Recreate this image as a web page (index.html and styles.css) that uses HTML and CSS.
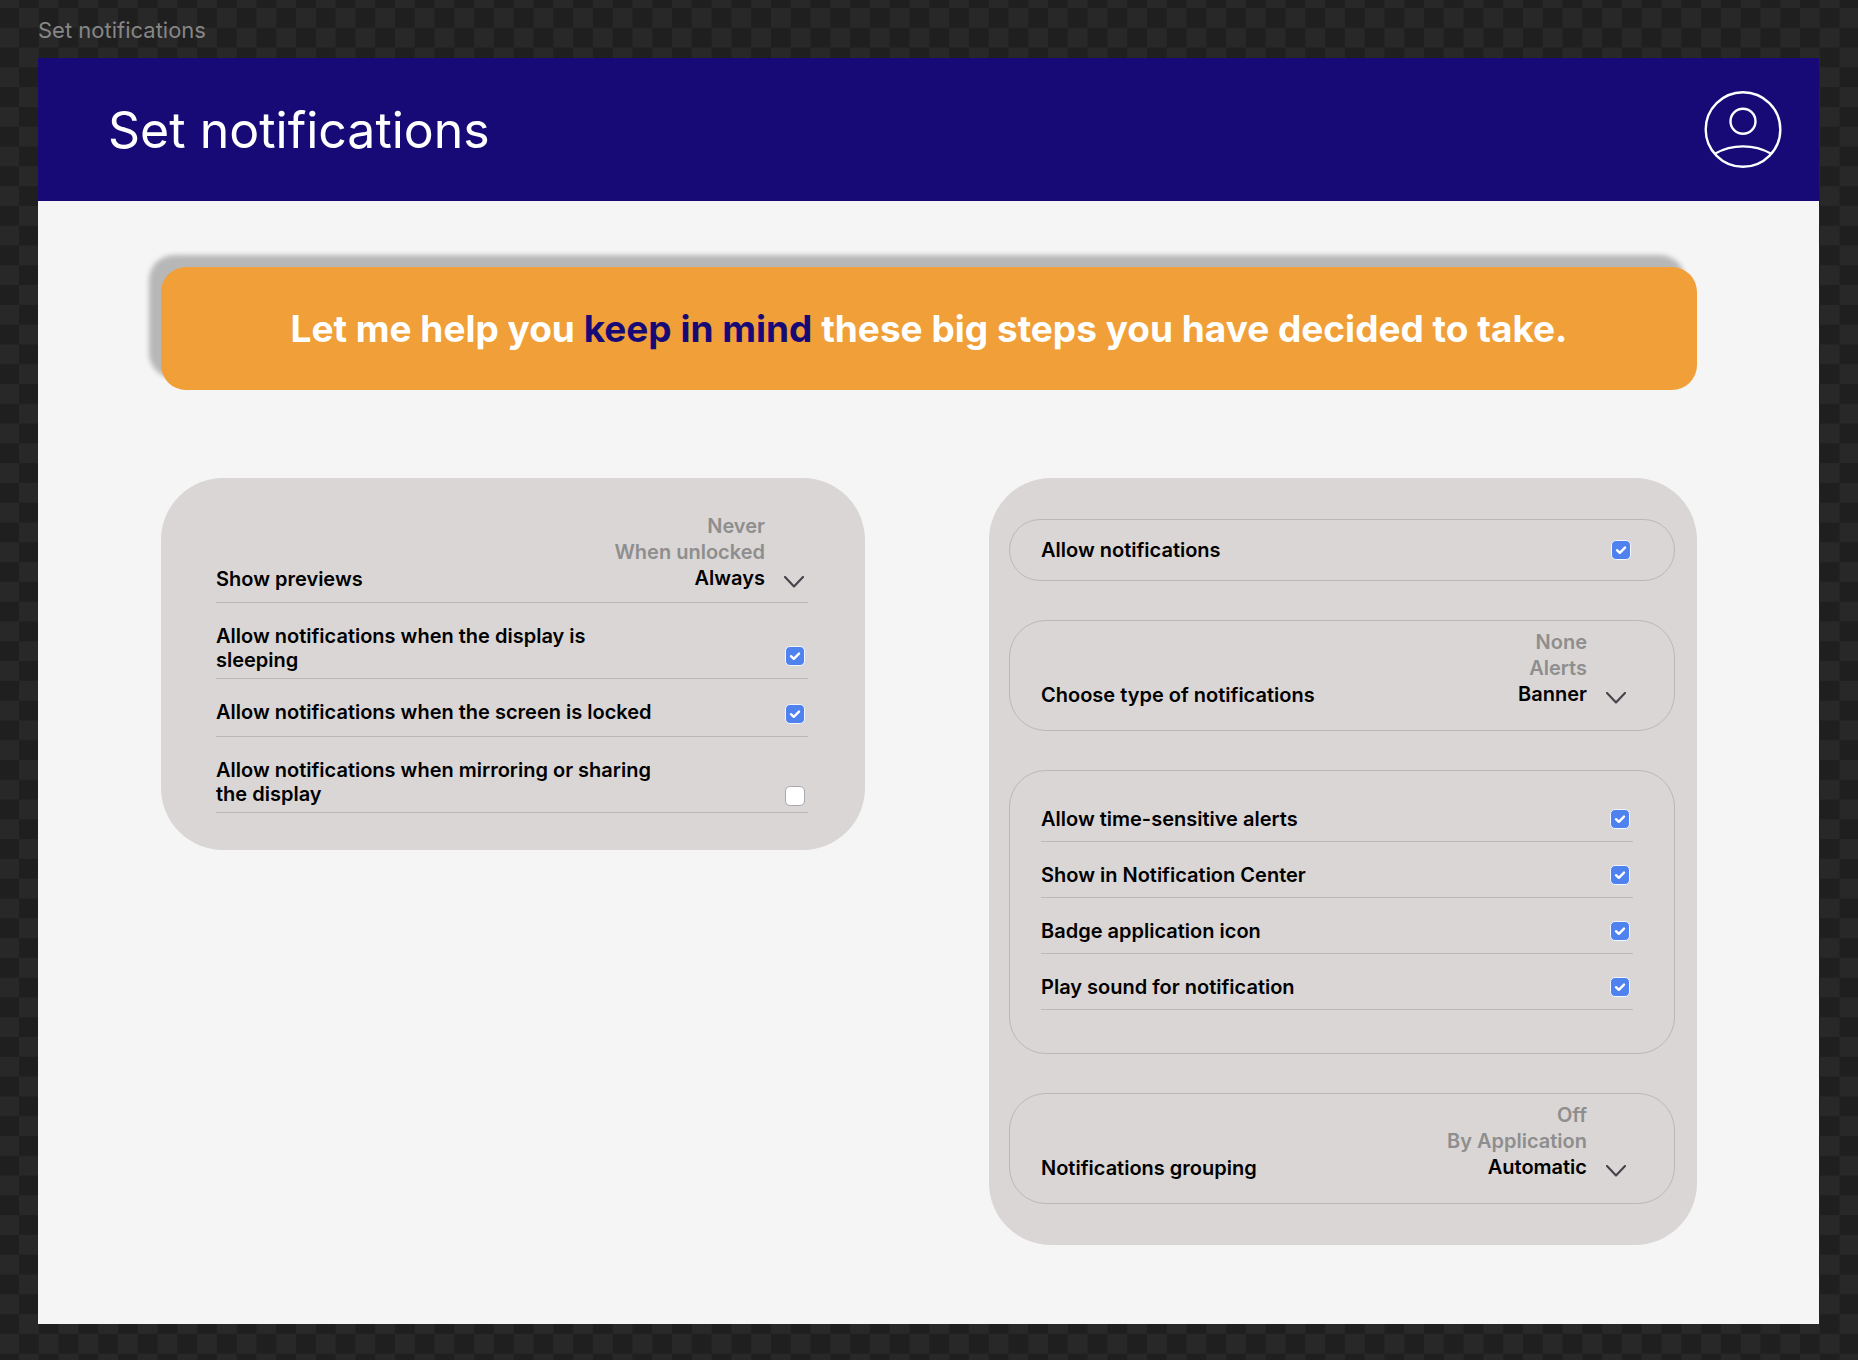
FILE: index.html
```html
<!DOCTYPE html>
<html lang="en">
<head>
<meta charset="utf-8">
<meta name="viewport" content="width=device-width, initial-scale=1">
<title>Set notifications</title>
<link rel="stylesheet" href="styles.css">
</head>
<body>
<p class="frame-label">Set notifications</p>
<div class="frame">
  <header class="header">
    <h1 class="title">Set notifications</h1>
    <button class="avatar" type="button" aria-label="Profile">
      <svg width="78" height="78" viewBox="0 0 78 78" fill="none" stroke="#fff" stroke-width="2.4" aria-hidden="true">
        <circle cx="39" cy="38.5" r="37.3"/>
        <circle cx="39" cy="30.2" r="12.5"/>
        <path d="M10.8 62.7A58 58 0 0 1 67.2 62.7"/>
      </svg>
    </button>
  </header>

  <main class="content">
    <p class="banner">Let me help you <strong>keep in mind</strong> these big steps you have decided to take.</p>

    <div class="panels">
      <section class="panel panel-general">
        <div class="row row-select">
          <label class="label" for="previews">Show previews</label>
          <select class="options" id="previews" size="3">
            <option>Never</option>
            <option>When unlocked</option>
            <option selected>Always</option>
          </select>
          <svg class="chevron" viewBox="0 0 20 12" aria-hidden="true"><path d="M1 1l9 9.4L19 1"/></svg>
        </div>
        <div class="row row-double">
          <label class="label" for="sleeping">Allow notifications when the display is sleeping</label>
          <input class="check check-raised" type="checkbox" id="sleeping" checked>
        </div>
        <div class="row">
          <label class="label" for="locked">Allow notifications when the screen is locked</label>
          <input class="check" type="checkbox" id="locked" checked>
        </div>
        <div class="row row-double">
          <label class="label" for="mirroring">Allow notifications when mirroring or sharing the display</label>
          <input class="check" type="checkbox" id="mirroring">
        </div>
      </section>

      <section class="panel panel-app">
        <div class="group group-single">
          <label class="label" for="allow">Allow notifications</label>
          <input class="check" type="checkbox" id="allow" checked>
        </div>
        <div class="group group-select">
          <label class="label" for="type">Choose type of notifications</label>
          <select class="options" id="type" size="3">
            <option>None</option>
            <option>Alerts</option>
            <option selected>Banner</option>
          </select>
          <svg class="chevron" viewBox="0 0 20 12" aria-hidden="true"><path d="M1 1l9 9.4L19 1"/></svg>
        </div>
        <div class="group group-list">
          <div class="row row-compact">
            <label class="label" for="sensitive">Allow time-sensitive alerts</label>
            <input class="check" type="checkbox" id="sensitive" checked>
          </div>
          <div class="row row-compact">
            <label class="label" for="center">Show in Notification Center</label>
            <input class="check" type="checkbox" id="center" checked>
          </div>
          <div class="row row-compact">
            <label class="label" for="badge">Badge application icon</label>
            <input class="check" type="checkbox" id="badge" checked>
          </div>
          <div class="row row-compact">
            <label class="label" for="sound">Play sound for notification</label>
            <input class="check" type="checkbox" id="sound" checked>
          </div>
        </div>
        <div class="group group-select">
          <label class="label" for="grouping">Notifications grouping</label>
          <select class="options" id="grouping" size="3">
            <option>Off</option>
            <option>By Application</option>
            <option selected>Automatic</option>
          </select>
          <svg class="chevron" viewBox="0 0 20 12" aria-hidden="true"><path d="M1 1l9 9.4L19 1"/></svg>
        </div>
      </section>
    </div>
  </main>
</div>
</body>
</html>
```

FILE: styles.css
```css
:root {
  --navy: #180a76;
  --orange: #f19f38;
  --panel: #dad6d5;
  --line: #bcb8b7;
  --muted: #8e8e8e;
}

* {
  box-sizing: border-box;
}

body {
  margin: 0;
  padding: 16px 39px 35px 38px;
  font-family: Inter, "Liberation Sans", sans-serif;
  color: #000;
  background-color: #1f1f1f;
  background-image: conic-gradient(#1f1f1f 25%, #282828 0 50%, #1f1f1f 0 75%, #282828 0);
  background-size: calc(475px / 12) calc(475px / 12);
  background-position: 19px 8px;
}

.frame-label {
  margin: 0;
  height: 42px;
  font-size: 22px;
  line-height: 28px;
  color: #868686;
}

.frame {
  background: #f5f5f5;
}

.header {
  display: flex;
  align-items: center;
  justify-content: space-between;
  height: 143px;
  padding: 0 37px 0 70px;
  background: var(--navy);
  color: #fff;
}

.title {
  margin: 0;
  font-size: 50px;
  line-height: 60px;
  font-weight: 400;
}

.avatar {
  display: flex;
  padding: 0;
  border: 0;
  background: none;
}

.content {
  padding: 66px 122px 79px 123px;
}

.banner {
  margin: 0 0 88px;
  padding: 39px 24px;
  border-radius: 25px;
  background: var(--orange);
  box-shadow: -12px -12px 5px rgba(0, 0, 0, 0.25);
  color: #fff;
  font-size: 37px;
  line-height: 45px;
  font-weight: 700;
  text-align: center;
}

.banner strong {
  font-weight: inherit;
  color: var(--navy);
}

.panels {
  display: grid;
  grid-template-columns: 704fr 708fr;
  gap: 124px;
  align-items: start;
}

.panel {
  border-radius: 62px;
  background: var(--panel);
  font-size: 20px;
  line-height: 24px;
  font-weight: 600;
}

.panel-general {
  padding: 35px 57px 37px 55px;
}

.panel-app {
  display: grid;
  gap: 39px;
  padding: 41px 22px 41px 20px;
}

.row {
  display: flex;
  align-items: flex-end;
  padding: 21px 0 12px;
  border-bottom: 1px solid var(--line);
}

.row-select {
  padding: 0 4px 11px 0;
}

.row-double {
  padding-bottom: 6px;
}

.row-compact {
  align-items: center;
  padding-bottom: 10px;
}

.group {
  border: 1px solid var(--line);
  border-radius: 37px;
}

.group-single {
  display: flex;
  align-items: center;
  padding: 18px 40px 18px 31px;
}

.group-select {
  display: flex;
  align-items: flex-end;
  padding: 8px 48px 23px 31px;
}

.group-list {
  padding: 15px 41px 43px 31px;
}

.label {
  max-width: 450px;
}

.options {
  margin: 0 0 0 auto;
  padding: 0;
  height: 78px;
  border: 0;
  outline: 0;
  overflow: hidden;
  background: none;
  font: inherit;
  text-align: right;
}

.options option {
  min-height: 26px;
  padding: 1px 0;
  font-weight: 600;
  line-height: 24px;
  color: var(--muted);
}

.options option:checked {
  background-image: linear-gradient(var(--panel), var(--panel));
  -webkit-text-fill-color: #000;
}

.chevron {
  width: 20px;
  height: 12px;
  margin: 0 0 3px 19px;
  fill: none;
  stroke: #47444c;
  stroke-width: 2.2;
  stroke-linecap: round;
  stroke-linejoin: round;
}

.check {
  appearance: none;
  flex: none;
  width: 20px;
  height: 20px;
  margin: 0 3px 0 auto;
  border: 1px solid #a9a7b0;
  border-radius: 5px;
  background: #fff;
}

.check-raised {
  margin-bottom: 6px;
}

.check:checked {
  border-color: #f2f6ff;
  background: #4f82ee url("data:image/svg+xml,%3Csvg xmlns='http://www.w3.org/2000/svg' viewBox='0 0 18 18' fill='none' stroke='%23fff' stroke-width='2.4' stroke-linecap='round' stroke-linejoin='round'%3E%3Cpath d='M5 9.2l2.8 2.6L13 6.6'/%3E%3C/svg%3E") center / 18px 18px no-repeat;
}
```
